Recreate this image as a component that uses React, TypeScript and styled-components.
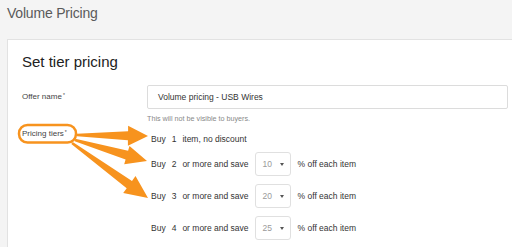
import React from 'react';
import styled, { createGlobalStyle } from 'styled-components';

const GlobalStyle = createGlobalStyle`
  html, body {
    margin: 0;
    padding: 0;
    background: #f4f4f4;
    font-family: 'Liberation Sans', Arial, sans-serif;
    color: #333;
    overflow: hidden;
  }
`;

interface Tier {
  qty: number;
  discount?: number;
}

const tiers: Tier[] = [
  { qty: 1 },
  { qty: 2, discount: 10 },
  { qty: 3, discount: 20 },
  { qty: 4, discount: 25 },
];

// arrow points, in page coordinates: [tailX, tailY, tipX, tipY, headLen, headHalf]
const arrows: number[][] = [
  [77, 135, 148, 136, 20, 10],
  [75, 140, 147, 161, 21, 9.5],
  [72, 143, 148, 198, 23, 10.5],
];

function arrowPath([x0, y0, x1, y1, len, half]: number[]) {
  const dx = x1 - x0;
  const dy = y1 - y0;
  const d = Math.hypot(dx, dy);
  const ux = dx / d;
  const uy = dy / d;
  const nx = -uy;
  const ny = ux;
  const bx = x1 - ux * len;
  const by = y1 - uy * len;
  const w0 = 1.2;
  const w1 = 4.5;
  const pts = [
    [x0 + nx * w0, y0 + ny * w0],
    [bx + nx * w1, by + ny * w1],
    [bx + nx * half, by + ny * half],
    [x1, y1],
    [bx - nx * half, by - ny * half],
    [bx - nx * w1, by - ny * w1],
    [x0 - nx * w0, y0 - ny * w0],
  ];
  return 'M' + pts.map((p) => p[0].toFixed(1) + ' ' + p[1].toFixed(1)).join(' L') + ' Z';
}

export default function App() {
  return (
    <Page>
      <GlobalStyle />
      <Header>Volume Pricing</Header>
      <Card>
        <CardTitle>Set tier pricing</CardTitle>
        <Field>
          <Label>
            Offer name<Req>*</Req>
          </Label>
          <TextInput>Volume pricing - USB Wires</TextInput>
        </Field>
        <Help>This will not be visible to buyers.</Help>
        <Field $top>
          <Label>
            Pricing tiers<Req>*</Req>
          </Label>
          <TierList>
            {tiers.map((t) => (
              <TierRow key={t.qty} $plain={!t.discount}>
                <span>Buy</span>
                <span>{t.qty}</span>
                {t.discount ? (
                  <>
                    <span>or more and save</span>
                    <Select>
                      <span>{t.discount}</span>
                      <Caret />
                    </Select>
                    <Suffix>% off each item</Suffix>
                  </>
                ) : (
                  <span>item, no discount</span>
                )}
              </TierRow>
            ))}
          </TierList>
        </Field>
      </Card>
      <Overlay width="512" height="247" viewBox="0 0 512 247">
        <rect x="19" y="125" width="57" height="17.5" rx="8.5" fill="none" stroke="#f7931e" strokeWidth="2.5" />
        {arrows.map((a, i) => (
          <path key={i} d={arrowPath(a)} fill="#f7931e" />
        ))}
      </Overlay>
    </Page>
  );
}

const Page = styled.div`
  position: relative;
  width: 512px;
  height: 247px;
  overflow: hidden;
`;

const Header = styled.div`
  height: 39px;
  box-sizing: border-box;
  padding: 5px 0 0 7px;
  font-size: 14px;
  line-height: 16px;
  color: #5a5a5a;
  letter-spacing: -0.2px;
`;

const Card = styled.div`
  margin-left: 7px;
  height: 208px;
  box-sizing: border-box;
  background: #fff;
  border-top: 1px solid #e2e2e2;
  border-left: 1px solid #e2e2e2;
  padding: 13px 4px 0 14px;
`;

const CardTitle = styled.div`
  font-size: 15px;
  line-height: 18px;
  color: #222;
  margin-bottom: 14px;
`;

const Field = styled.div<{ $top?: boolean }>`
  display: flex;
  align-items: ${(p) => (p.$top ? 'flex-start' : 'center')};
`;

const Label = styled.div`
  width: 125px;
  flex-shrink: 0;
  font-size: 8px;
  line-height: 10px;
  color: #444;
`;

const Req = styled.sup`
  font-size: 5px;
  vertical-align: top;
  position: relative;
  top: -2px;
  margin-left: 1px;
`;

const TextInput = styled.div`
  flex: 1;
  height: 24px;
  box-sizing: border-box;
  border: 1px solid #dcdcdc;
  border-radius: 2px;
  padding-left: 10px;
  display: flex;
  align-items: center;
  font-size: 8.5px;
  color: #333;
`;

const Help = styled.div`
  margin: 5px 0 6px 125px;
  font-size: 7.2px;
  line-height: 9px;
  color: #888;
`;

const TierList = styled.div`
  display: flex;
  flex-direction: column;
  gap: 8px;
  padding: 5px 0 0 4px;
`;

const TierRow = styled.div<{ $plain?: boolean }>`
  display: flex;
  align-items: center;
  gap: 6px;
  height: ${(p) => (p.$plain ? '10px' : '24px')};
  font-size: 8.5px;
  color: #333;
`;

const Select = styled.div`
  width: 36px;
  height: 24px;
  box-sizing: border-box;
  border: 1px solid #e0e0e0;
  border-radius: 3px;
  padding: 0 6px 0 7px;
  display: flex;
  align-items: center;
  justify-content: space-between;
  color: #9a9a9a;
`;

const Caret = styled.span`
  width: 0;
  height: 0;
  border-left: 2px solid transparent;
  border-right: 2px solid transparent;
  border-top: 3px solid #555;
`;

const Suffix = styled.span`
  margin-left: 1px;
`;

const Overlay = styled.svg`
  position: absolute;
  top: 0;
  left: 0;
  pointer-events: none;
`;
